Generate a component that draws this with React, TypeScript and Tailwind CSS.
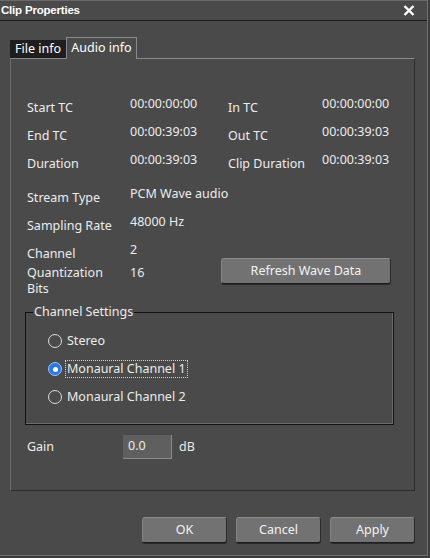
import { useState } from "react";

type Row = { label: string; value: string; label2?: string; value2?: string };

const timeRows: Row[] = [
  { label: "Start TC", value: "00:00:00:00", label2: "In TC", value2: "00:00:00:00" },
  { label: "End TC", value: "00:00:39:03", label2: "Out TC", value2: "00:00:39:03" },
  { label: "Duration", value: "00:00:39:03", label2: "Clip Duration", value2: "00:00:39:03" },
];

const streamRows: Row[] = [
  { label: "Stream Type", value: "PCM Wave audio" },
  { label: "Sampling Rate", value: "48000 Hz" },
  { label: "Channel", value: "2" },
];

const channels = ["Stereo", "Monaural Channel 1", "Monaural Channel 2"];

function DialogButton({ children, className = "" }: { children: React.ReactNode; className?: string }) {
  return (
    <button
      className={`h-[26px] rounded-[3px] border border-t-[#8c8c8c] border-l-[#848484] border-r-[#2a2a2a] border-b-[#1c1c1c] bg-[#727272] text-[12.5px] text-[#f2f2f2] shadow-[0_1px_0_#2a2a2a] ${className}`}
    >
      {children}
    </button>
  );
}

function Radio({ label, checked, onSelect }: { label: string; checked: boolean; onSelect: () => void }) {
  return (
    <div className="flex h-[28px] items-center cursor-default" onClick={onSelect}>
      {checked ? (
        <span className="flex h-[14px] w-[14px] items-center justify-center rounded-full border border-[#9cc3f5] bg-[#2b78e4]">
          <span className="h-[5px] w-[5px] rounded-full bg-white" />
        </span>
      ) : (
        <span className="h-[14px] w-[14px] rounded-full border border-[#dcdcdc]" />
      )}
      <span
        className={`ml-[4px] px-[1px] leading-[16px] ${checked ? "outline outline-1 outline-dotted outline-[#d0d0d0]" : ""}`}
      >
        {label}
      </span>
    </div>
  );
}

export default function App() {
  const [channel, setChannel] = useState(1);

  return (
    <div className="h-[558px] w-[430px] overflow-hidden bg-[#3c3c3c] text-[12.5px] text-[#ececec] [font-family:'Noto_Sans',sans-serif]">
      <div className="h-[556px] w-[428px] border-r border-b border-[#727272] bg-[#4a4a4a]">
        {/* title bar */}
        <div className="flex h-[21px] items-center justify-between border-t border-[#6a6a6a] border-b border-b-[#1e1e1e] pl-[1px] pr-[12px]">
          <span className="text-[11.5px] font-bold tracking-[-0.2px] text-white [font-family:'Liberation_Sans',sans-serif]">
            Clip Properties
          </span>
          <svg width="12" height="11" viewBox="0 0 12 11">
            <path d="M1.5 1 L10.5 10 M10.5 1 L1.5 10" stroke="#ffffff" strokeWidth="2.4" />
          </svg>
        </div>

        <div className="pl-[10px] pt-[16px]">
          {/* tabs */}
          <div className="flex h-[21px] items-end">
            <div className="flex h-[18px] w-[56px] items-center justify-center bg-[#1e1e1e] text-white">File info</div>
            <div className="relative -mb-px flex h-[22px] w-[71px] items-center justify-center border border-b-0 border-[#8a8a8a] bg-[#4a4a4a] text-white">
              Audio info
            </div>
          </div>

          {/* tab page */}
          <div className="h-[433px] w-[405px] border border-t-[#8a8a8a] border-l-[#6e6e6e] border-r-[#2c2c2c] border-b-[#2c2c2c] px-[14px] pt-[36px]">
            <div className="pl-[2px]">
              {timeRows.map((r) => (
                <div key={r.label} className="flex h-[28px] items-start">
                  <span className="mt-[4px] w-[103px]">{r.label}</span>
                  <span className="w-[98px]">{r.value}</span>
                  <span className="mt-[4px] w-[94px]">{r.label2}</span>
                  <span>{r.value2}</span>
                </div>
              ))}
              <div className="h-[6px]" />
              {streamRows.map((r) => (
                <div key={r.label} className="flex h-[28px] items-start">
                  <span className="mt-[4px] w-[103px]">{r.label}</span>
                  <span>{r.value}</span>
                </div>
              ))}
              <div className="-mt-[4px] flex h-[42px] items-start">
                <span className="w-[103px] leading-[16px]">
                  Quantization
                  <br />
                  Bits
                </span>
                <span className="w-[91px] leading-[16px]">16</span>
                <DialogButton className="-mt-[7px] w-[170px]">Refresh Wave Data</DialogButton>
              </div>
            </div>

            {/* channel settings group */}
            <div className="relative mt-[5px] h-[113px] w-[369px] border border-[#121212] pt-[14px] pl-[22px] shadow-[inset_-1px_-1px_0_#6c6c6c]">
              <span className="absolute -top-[9px] left-[7px] bg-[#4a4a4a] px-[1px] leading-[16px]">Channel Settings</span>
              {channels.map((c, i) => (
                <Radio key={c} label={c} checked={channel === i} onSelect={() => setChannel(i)} />
              ))}
            </div>

            <div className="mt-[10px] flex items-center pl-[2px]">
              <span className="w-[96px]">Gain</span>
              <div className="flex h-[24px] w-[49px] items-center border-b border-r border-[#8a8a8a] bg-[#5f5f5f] pl-[5px]">0.0</div>
              <span className="ml-[7px]">dB</span>
            </div>
          </div>

          {/* dialog buttons */}
          <div className="mt-[26px] flex w-[405px] justify-end gap-[9px]">
            <DialogButton className="w-[85px]">OK</DialogButton>
            <DialogButton className="w-[85px]">Cancel</DialogButton>
            <DialogButton className="w-[85px]">Apply</DialogButton>
          </div>
        </div>
      </div>
    </div>
  );
}
